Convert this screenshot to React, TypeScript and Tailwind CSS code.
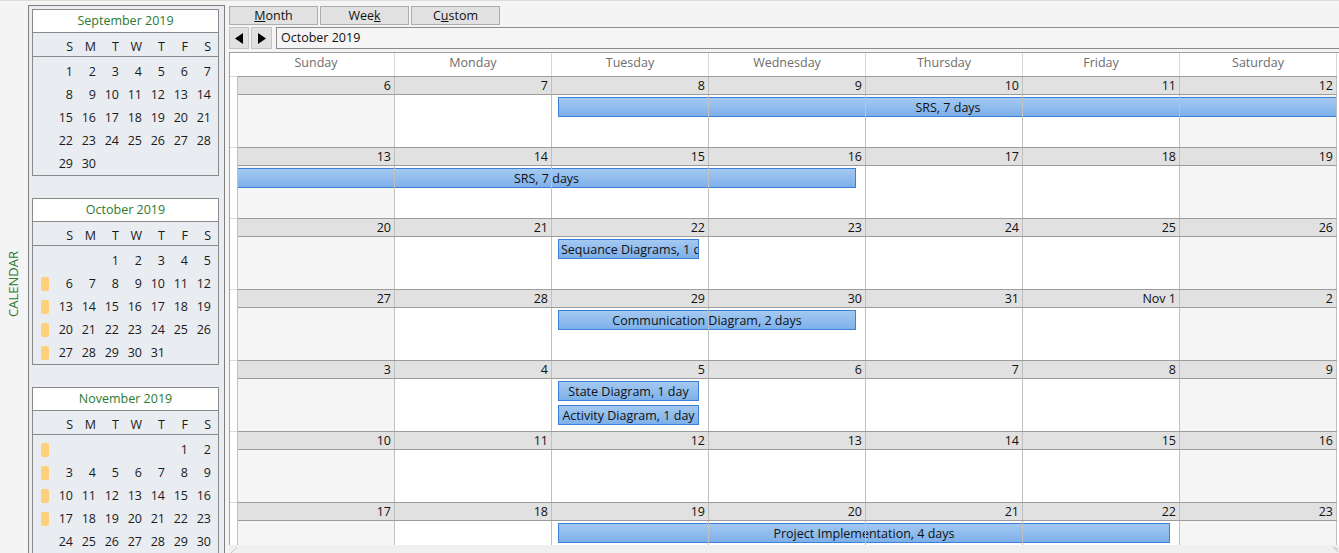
import React from "react";

type Ev = { start: number; end: number; text: string; slot?: number; openLeft?: boolean; openRight?: boolean };
type Week = { days: string[]; events: Ev[] };

const COL = 157;

const weeks: Week[] = [
  { days: ["6", "7", "8", "9", "10", "11", "12"], events: [{ start: 2, end: 6, text: "SRS, 7 days", openRight: true }] },
  { days: ["13", "14", "15", "16", "17", "18", "19"], events: [{ start: 0, end: 3, text: "SRS, 7 days", openLeft: true }] },
  { days: ["20", "21", "22", "23", "24", "25", "26"], events: [{ start: 2, end: 2, text: "Sequance Diagrams, 1 day" }] },
  { days: ["27", "28", "29", "30", "31", "Nov 1", "2"], events: [{ start: 2, end: 3, text: "Communication Diagram, 2 days" }] },
  {
    days: ["3", "4", "5", "6", "7", "8", "9"],
    events: [
      { start: 2, end: 2, text: "State Diagram, 1 day" },
      { start: 2, end: 2, text: "Activity Diagram, 1 day", slot: 1 },
    ],
  },
  { days: ["10", "11", "12", "13", "14", "15", "16"], events: [] },
  { days: ["17", "18", "19", "20", "21", "22", "23"], events: [{ start: 2, end: 5, text: "Project Implementation, 4 days" }] },
];

const dayNames = ["Sunday", "Monday", "Tuesday", "Wednesday", "Thursday", "Friday", "Saturday"];

type Mini = { title: string; rows: (number | null)[][]; marks: boolean[] };

const minis: Mini[] = [
  {
    title: "September 2019",
    rows: [
      [1, 2, 3, 4, 5, 6, 7],
      [8, 9, 10, 11, 12, 13, 14],
      [15, 16, 17, 18, 19, 20, 21],
      [22, 23, 24, 25, 26, 27, 28],
      [29, 30, null, null, null, null, null],
    ],
    marks: [false, false, false, false, false],
  },
  {
    title: "October 2019",
    rows: [
      [null, null, 1, 2, 3, 4, 5],
      [6, 7, 8, 9, 10, 11, 12],
      [13, 14, 15, 16, 17, 18, 19],
      [20, 21, 22, 23, 24, 25, 26],
      [27, 28, 29, 30, 31, null, null],
    ],
    marks: [false, true, true, true, true],
  },
  {
    title: "November 2019",
    rows: [
      [null, null, null, null, null, 1, 2],
      [3, 4, 5, 6, 7, 8, 9],
      [10, 11, 12, 13, 14, 15, 16],
      [17, 18, 19, 20, 21, 22, 23],
      [24, 25, 26, 27, 28, 29, 30],
    ],
    marks: [true, true, true, true, false],
  },
];

function MiniMonth({ m }: { m: Mini }) {
  return (
    <div className="shrink-0 border border-[#8a8a8a] bg-[#e9ecf1] text-[12.5px] text-[#1a1a1a]">
      <div className="flex h-[23px] items-center justify-center border-b border-[#8a8a8a] bg-white text-[#2b7a30]">
        {m.title}
      </div>
      <div className="grid h-[24px] grid-cols-[17px_repeat(7,23px)] items-center border-b border-[#8a8a8a] pt-[5px]">
        <div />
        {["S", "M", "T", "W", "T", "F", "S"].map((d, i) => (
          <div key={i} className="text-right leading-[16px]">
            {d}
          </div>
        ))}
      </div>
      <div className="pt-[3px]">
        {m.rows.map((row, r) => (
          <div key={r} className="grid h-[23px] grid-cols-[17px_repeat(7,23px)] items-center">
            <div className="flex items-center">
              {m.marks[r] && <div className="ml-[8px] h-[14px] w-[8px] rounded-[2px] bg-[#ffd07c]" />}
            </div>
            {row.map((n, i) => (
              <div key={i} className="text-right leading-[16px]">
                {n ?? ""}
              </div>
            ))}
          </div>
        ))}
      </div>
    </div>
  );
}

function WeekRow({ w }: { w: Week }) {
  return (
    <div className="flex h-[71px] shrink-0">
      {/* week strip */}
      <div className="w-[8px] shrink-0 border-r border-[#c0c0c0] bg-white">
        <div className="h-[1px] bg-[#dcdcdc]" />
      </div>
      <div className="flex w-[1099px] shrink-0 flex-col">
        <div className="flex h-[19px] border-y border-[#9c9c9c] bg-[#e1e1e1]">
          {w.days.map((d, i) => (
            <div key={i} className="w-[157px] shrink-0 border-r border-[#c0c0c0] pr-[3px] text-right text-[12.5px] leading-[18px] text-[#111]">
              {d}
            </div>
          ))}
        </div>
        <div className="relative flex h-[52px]">
          {w.days.map((_, i) => (
            <div
              key={i}
              className={
                i === 0 || i === 6
                  ? "w-[157px] shrink-0 border-r border-[#c0c0c0] bg-[#f5f5f5]"
                  : "w-[157px] shrink-0 border-r border-[#c0c0c0] bg-white"
              }
            />
          ))}
          {w.events.map((e, k) => {
            const left = e.openLeft ? 0 : e.start * COL + 6;
            const right = e.openRight ? (e.end + 1) * COL : (e.end + 1) * COL - 10;
            return (
              <div
                key={k}
                className={
                  "absolute h-[20px] overflow-hidden whitespace-nowrap border-y border-[#3a80d6] bg-linear-to-b from-[#a4c9f1] to-[#7db0ea] px-[2px] text-center text-[12.5px] leading-[19px] text-[#111] " +
                  (e.openLeft ? "" : "border-l ") +
                  (e.openRight ? "" : "border-r")
                }
                style={{ left, width: right - left, top: 2 + (e.slot ?? 0) * 24 }}
              >
                {e.text}
              </div>
            );
          })}
          {/* grid lines drawn over the events */}
          <div className="pointer-events-none absolute inset-0 flex">
            {w.days.map((_, i) => (
              <div key={i} className="w-[157px] shrink-0 border-r border-[#c0c0c0]" />
            ))}
          </div>
        </div>
      </div>
    </div>
  );
}

export default function App() {
  return (
    <div className="flex h-[553px] w-[1339px] overflow-hidden border-t border-[#dcdcdc] bg-[#f4f4f4] font-['Open_Sans',sans-serif] text-[12.5px] text-[#111]">
      {/* side title */}
      <div className="flex w-[28px] shrink-0 items-center justify-center pt-[14px]">
        <div className="rotate-180 text-[13px] text-[#2b7a30] [writing-mode:vertical-rl]">CALENDAR</div>
      </div>

      {/* month pickers */}
      <aside className="mt-[4px] flex w-[197px] shrink-0 flex-col gap-[22px] overflow-hidden border-x border-t border-[#7f7f7f] bg-[#e9ecf1] pl-[3px] pr-[5px] pt-[3px]">
        {minis.map((m) => (
          <MiniMonth key={m.title} m={m} />
        ))}
      </aside>

      {/* main */}
      <main className="ml-[4px] flex min-w-0 flex-1 flex-col">
        <div className="mt-[5px] flex h-[19px] gap-[2px]">
          <button className="w-[89px] border border-[#adadad] bg-[#e1e1e1] text-[12.5px] leading-[18px]">
            <span className="underline">M</span>onth
          </button>
          <button className="w-[89px] border border-[#adadad] bg-[#e1e1e1] text-[12.5px] leading-[18px]">
            Wee<span className="underline">k</span>
          </button>
          <button className="w-[89px] border border-[#adadad] bg-[#e1e1e1] text-[12.5px] leading-[18px]">
            C<span className="underline">u</span>stom
          </button>
        </div>

        <div className="mt-[2px] flex h-[22px] items-stretch">
          <button className="flex w-[20px] items-center justify-center border border-[#c4c4c4] bg-[#e1e1e1]">
            <svg width="9" height="11" viewBox="0 0 9 11">
              <path d="M8 0 L8 11 L0 5.5 Z" fill="#000" />
            </svg>
          </button>
          <button className="ml-[2px] flex w-[21px] items-center justify-center border border-[#c4c4c4] bg-[#e1e1e1]">
            <svg width="9" height="11" viewBox="0 0 9 11">
              <path d="M1 0 L1 11 L9 5.5 Z" fill="#000" />
            </svg>
          </button>
          <div className="ml-[4px] flex flex-1 items-center border-y border-l border-[#8c8c8c] bg-[#f5f5f5] pl-[4px] text-[12.5px]">
            October 2019
          </div>
        </div>

        <div className="mt-[3px] flex min-h-0 flex-1 flex-col overflow-hidden border-l border-t border-[#a0a0a0] bg-white">
          <div className="flex h-[23px] shrink-0">
            <div className="w-[8px] shrink-0" />
            {dayNames.map((d) => (
              <div key={d} className="w-[157px] shrink-0 border-r border-[#d8d8d8] text-center text-[12.5px] leading-[20px] text-[#6d6d6d]">
                {d}
              </div>
            ))}
          </div>
          {weeks.map((w, i) => (
            <WeekRow key={i} w={w} />
          ))}
        </div>

        <div className="relative h-[8px] shrink-0 bg-[#f0f0f0]">
          <svg className="absolute left-[2px] top-[2px]" width="6" height="6" viewBox="0 0 6 6">
            <path d="M0 6 L6 0" stroke="#c8c8c8" strokeWidth="1" />
          </svg>
          <svg className="absolute right-[1px] top-[1px]" width="6" height="6" viewBox="0 0 6 6">
            <path d="M1 1 L6 6 M3 1 L6 4" stroke="#c0c0c0" strokeWidth="1" />
          </svg>
        </div>
      </main>
    </div>
  );
}
